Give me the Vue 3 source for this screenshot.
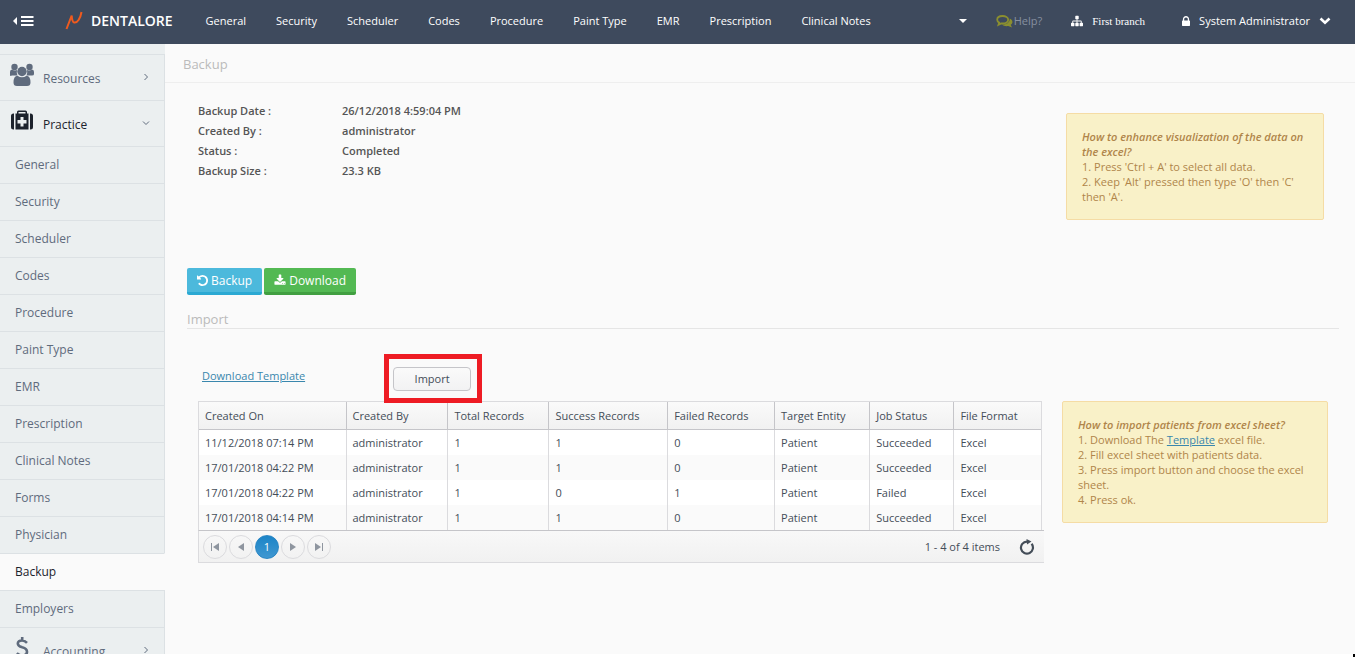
<template>
  <div class="app">
    <header class="topbar">
      <button class="menu-toggle" type="button" aria-label="Toggle menu">
        <svg width="21" height="12" viewBox="0 0 21 12">
          <path d="M4 2v8L0 6z" fill="#fff" />
          <path d="M8 2h12.500M8 6h12.500M8 10h12.500" stroke="#fff" stroke-width="2" />
        </svg>
      </button>
      <a class="brand" href="#">
        <svg width="18" height="19" viewBox="0 0 18 19">
          <path d="M1.500 18L6.700 4.500C6.900 7.500 7 10.800 9.200 11.500C12.500 12.300 15.500 7 16.500 1" fill="none" stroke="#f05a1e" stroke-width="2" stroke-linejoin="bevel" />
        </svg>
        <span>DENTALORE</span>
      </a>
      <nav class="topnav">
        <a v-for="item in topMenu" :key="item" href="#">{{ item }}</a>
      </nav>
      <button class="caret" type="button" aria-label="More">
        <svg width="8" height="4" viewBox="0 0 8 4"><path d="M0 0h8L4 4z" fill="#fff" /></svg>
      </button>
      <a class="help" href="#">
        <svg width="17" height="14" viewBox="0 0 17 14">
          <path d="M6.500 2C3.500 2 1.200 3.400 1.200 5.700c0 1.300.8 2.300 2 2.900L2.500 10.800l2.800-1.400c4 .5 6.900-1.100 6.900-3.700C12.200 3.400 9.500 2 6.500 2z" fill="none" stroke="#8b8f2f" stroke-width="1.800" />
          <path d="M13.700 4.500c3.600 1.700 3.300 4.900 1 6.300l1.300 2.700-3.700-1.500c-2.700.4-4.800-.1-6.200-1.400 4.400 0 8-2 7.600-6.100z" fill="#8b8f2f" />
        </svg>
        <span>Help?</span>
      </a>
      <a class="branch" href="#">
        <svg width="12" height="12" viewBox="0 0 1792 1792">
          <path fill="#fff" d="M1792 1248v320q0 40-28 68t-68 28h-320q-40 0-68-28t-28-68v-320q0-40 28-68t68-28h96v-192h-512v192h96q40 0 68 28t28 68v320q0 40-28 68t-68 28h-320q-40 0-68-28t-28-68v-320q0-40 28-68t68-28h96v-192h-512v192h96q40 0 68 28t28 68v320q0 40-28 68t-68 28h-320q-40 0-68-28t-28-68v-320q0-40 28-68t68-28h96v-192q0-52 38-90t90-38h512v-192h-96q-40 0-68-28t-28-68v-320q0-40 28-68t68-28h320q40 0 68 28t28 68v320q0 40-28 68t-68 28h-96v192h512q52 0 90 38t38 90v192h96q40 0 68 28t28 68z" />
        </svg>
        <span>First branch</span>
      </a>
      <a class="user" href="#">
        <svg width="8" height="10" viewBox="320 128 1152 1408">
          <path fill="#fff" d="M640 768h512v-192q0-106-75-181t-181-75-181 75-75 181v192zm832 96v576q0 40-28 68t-68 28h-960q-40 0-68-28t-28-68v-576q0-40 28-68t68-28h32v-192q0-184 132-316t316-132 316 132 132 316v192h32q40 0 68 28t28 68z" />
        </svg>
        <span>System Administrator</span>
        <svg width="12" height="8" viewBox="0 0 12 8">
          <path d="M1.500 1.500L6 5.700l4.500-4.200" fill="none" stroke="#fff" stroke-width="2.600" />
        </svg>
      </a>
    </header>

    <div class="body">
      <aside class="sidebar">
        <a class="group" href="#">
          <svg width="24" height="24" viewBox="0 0 24 24" fill="#5f6b7d">
            <circle cx="4.500" cy="4" r="3.200" />
            <circle cx="19.500" cy="4" r="3.200" />
            <path d="M0 12V9q0-2.500 2-2.500 2.500 1.500 5 .5-.7 3 .5 5.500H2Q0 13.500 0 12z" />
            <path d="M24 12V9q0-2.500-2-2.500-2.500 1.500-5 .5.7 3-.5 5.500H22q2 0 2-1.500z" />
            <circle cx="12" cy="8.500" r="4.700" />
            <path d="M3.500 19.500q0-6.500 4-6.800 4.500 3 9 0 4 .3 4 6.800 0 3.500-3.500 3.500H7q-3.500 0-3.500-3.500z" />
          </svg>
          <span>Resources</span>
          <svg class="arrow" width="8" height="8" viewBox="0 0 8 8"><path d="M2.500 1L5.500 4l-3 3" /></svg>
        </a>
        <a class="group open" href="#">
          <svg width="24" height="24" viewBox="0 0 24 24" fill="#1c222c">
            <path d="M4 4.500v16H3.500Q1 20.500 1 18V7q0-2.500 2.500-2.500zM20 4.500v16h.5Q23 20.500 23 18V7q0-2.500-2.500-2.500z" />
            <path fill-rule="evenodd" d="M5.500 4.500H7V3q0-1.500 1.500-1.500h7Q17 1.500 17 3v1.500h1.500v16h-13zM8.500 3v1.500h7V3zM10.500 8v3h-3v3.500h3v3h3v-3h3V11h-3V8z" />
          </svg>
          <span>Practice</span>
          <svg class="arrow" width="8" height="6" viewBox="0 0 8 6"><path d="M1 1.500l3 3 3-3" /></svg>
        </a>
        <a v-for="item in sideMenu" :key="item" class="sub" :class="{ active: item === current }" href="#">{{ item }}</a>
        <a class="group" href="#">
          <svg width="24" height="24" viewBox="0 0 24 24">
            <path d="M17 6.800Q14.800 4.500 12 4.500 7.800 4.500 7.800 7.500q0 2.500 4.400 3.800 4.800 1.300 4.800 4.500 0 3.700-4.800 3.700-3.200 0-5.400-2.300M12.200 1v3.500M12.200 19.500V23" fill="none" stroke="#5f6b7d" stroke-width="2.600" />
          </svg>
          <span>Accounting</span>
          <svg class="arrow" width="8" height="8" viewBox="0 0 8 8"><path d="M2.500 1L5.500 4l-3 3" /></svg>
        </a>
      </aside>

      <main class="content">
        <h1 class="page-title">Backup</h1>

        <section class="summary">
          <dl class="details">
            <template v-for="row in details" :key="row.label">
              <dt>{{ row.label }} :</dt>
              <dd>{{ row.value }}</dd>
            </template>
          </dl>
          <div class="note note-excel">
            <strong>How to enhance visualization of the data on the excel?</strong>
            <p>1. Press 'Ctrl + A' to select all data.</p>
            <p>2. Keep 'Alt' pressed then type 'O' then 'C' then 'A'.</p>
          </div>
        </section>

        <div class="actions">
          <button class="btn btn-info" type="button">
            <svg width="11" height="13" viewBox="0 0 1536 1792">
              <path fill="#fff" d="M1536 896q0 156-61 298t-164 245-245 164-298 61q-172 0-327-72.500t-264-204.500q-7-10-6.500-22.500t8.500-20.500l137-138q10-9 25-9 16 2 23 12 73 95 179 147t225 52q104 0 198.500-40.500t163.500-109.500 109.500-163.500 40.500-198.500-40.500-198.500-109.500-163.500-163.500-109.500-198.500-40.500q-98 0-188 35.500t-160 101.500l137 138q31 30 14 69-17 40-59 40h-448q-26 0-45-19t-19-45v-448q0-42 40-59 39-17 69 14l130 129q107-101 244.500-156.500t284.500-55.500q156 0 298 61t245 164 164 245 61 298z" />
            </svg>
            Backup
          </button>
          <button class="btn btn-success" type="button">
            <svg width="12" height="13" viewBox="0 0 1792 1792">
              <path fill="#fff" d="M1344 1344q0-26-19-45t-45-19-45 19-19 45 19 45 45 19 45-19 19-45zm256 0q0-26-19-45t-45-19-45 19-19 45 19 45 45 19 45-19 19-45zm128-224v320q0 40-28 68t-68 28h-1472q-40 0-68-28t-28-68v-320q0-40 28-68t68-28h465l135 136q58 56 136 56t136-56l136-136h464q40 0 68 28t28 68zm-325-569q17 41-14 70l-448 448q-18 19-45 19t-45-19l-448-448q-31-29-14-70 17-39 59-39h256v-448q0-26 19-45t45-19h256q26 0 45 19t19 45v448h256q42 0 59 39z" />
            </svg>
            Download
          </button>
        </div>

        <h2 class="section-title">Import</h2>

        <section class="import">
          <div class="import-main">
            <div class="import-tools">
              <a class="template-link" href="#">Download Template</a>
              <div class="highlight">
                <button class="btn-import" type="button">Import</button>
              </div>
            </div>

            <table class="grid">
              <thead>
                <tr>
                  <th v-for="col in columns" :key="col.key" :style="{ width: col.width }">{{ col.title }}</th>
                </tr>
              </thead>
              <tbody>
                <tr v-for="(job, i) in jobs" :key="i">
                  <td v-for="col in columns" :key="col.key">{{ job[col.key] }}</td>
                </tr>
              </tbody>
            </table>
            <div class="pager">
              <button type="button" aria-label="First page">
                <svg width="10" height="8" viewBox="0 0 10 8"><path d="M1 0h1v8H1zM3 4l6-4v8z" /></svg>
              </button>
              <button type="button" aria-label="Previous page">
                <svg width="10" height="8" viewBox="0 0 10 8"><path d="M2 4l6-4v8z" /></svg>
              </button>
              <button class="selected" type="button">1</button>
              <button type="button" aria-label="Next page">
                <svg width="10" height="8" viewBox="0 0 10 8"><path d="M8 4L2 0v8z" /></svg>
              </button>
              <button type="button" aria-label="Last page">
                <svg width="10" height="8" viewBox="0 0 10 8"><path d="M8 0h1v8H8zM7 4L1 0v8z" /></svg>
              </button>
              <span class="pager-info">1 - 4 of 4 items</span>
              <a class="refresh" href="#" aria-label="Refresh">
                <svg width="16" height="16" viewBox="0 0 16 16">
                  <path d="M12.600 4.800A6 6 0 1 1 8 2.600" fill="none" stroke="#444d58" stroke-width="2.200" />
                  <path d="M7.500 0l5 2.400-4.500 3.200z" fill="#444d58" />
                </svg>
              </a>
            </div>
          </div>

          <div class="note note-import">
            <strong>How to import patients from excel sheet?</strong>
            <p>1. Download The <a href="#">Template</a> excel file.</p>
            <p>2. Fill excel sheet with patients data.</p>
            <p>3. Press import button and choose the excel sheet.</p>
            <p>4. Press ok.</p>
          </div>
        </section>
      </main>
    </div>
    <span class="corner"></span>
  </div>
</template>

<script setup>
import { ref } from "vue";

const topMenu = ["General", "Security", "Scheduler", "Codes", "Procedure", "Paint Type", "EMR", "Prescription", "Clinical Notes"];

const sideMenu = [...topMenu, "Forms", "Physician", "Backup", "Employers"];
const current = ref("Backup");

const details = [
  { label: "Backup Date", value: "26/12/2018 4:59:04 PM" },
  { label: "Created By", value: "administrator" },
  { label: "Status", value: "Completed" },
  { label: "Backup Size", value: "23.3 KB" },
];

const columns = [
  { key: "createdOn", title: "Created On", width: "17.4%" },
  { key: "createdBy", title: "Created By", width: "12.1%" },
  { key: "total", title: "Total Records", width: "12%" },
  { key: "success", title: "Success Records", width: "14.1%" },
  { key: "failed", title: "Failed Records", width: "12.7%" },
  { key: "entity", title: "Target Entity", width: "11.3%" },
  { key: "status", title: "Job Status", width: "10%" },
  { key: "format", title: "File Format", width: "10.4%" },
];

const job = (createdOn, success, failed, status) => ({
  createdOn,
  createdBy: "administrator",
  total: 1,
  success,
  failed,
  entity: "Patient",
  status,
  format: "Excel",
});

const jobs = ref([
  job("11/12/2018 07:14 PM", 1, 0, "Succeeded"),
  job("17/01/2018 04:22 PM", 1, 0, "Succeeded"),
  job("17/01/2018 04:22 PM", 0, 1, "Failed"),
  job("17/01/2018 04:14 PM", 1, 0, "Succeeded"),
]);
</script>

<style>
body {
  margin: 0;
  background: #fff;
}
</style>

<style scoped>
.app {
  display: flex;
  flex-direction: column;
  height: calc(100vh - 3px);
  background: #fafafa;
  color: #444d58;
  font-family: "Open Sans", "Noto Sans", sans-serif;
  font-size: 11px;
}

.app *,
.app {
  box-sizing: border-box;
}

a {
  color: inherit;
  text-decoration: none;
}

button {
  padding: 0;
  border: none;
  background: none;
  font-family: inherit;
  cursor: pointer;
}

svg {
  display: block;
  flex: none;
}

/* top bar */
.topbar {
  display: flex;
  align-items: center;
  flex: none;
  height: 44px;
  padding: 0 24px 3px 13px;
  background: #3e4a5d;
  color: #fff;
  white-space: nowrap;
}

.brand {
  display: flex;
  align-items: center;
  gap: 8px;
  margin-left: 31px;
  font-size: 14px;
  font-weight: 600;
}

.topnav {
  display: flex;
  gap: 30px;
  margin-left: 33px;
}

.caret {
  margin-left: auto;
}

.help,
.branch,
.user {
  display: flex;
  align-items: center;
}

.help {
  gap: 1px;
  margin-left: 29px;
  color: #8690a0;
}

.branch {
  gap: 9px;
  margin-left: 29px;
  font-family: "Liberation Serif", serif;
  font-size: 11px;
}

.user {
  gap: 9px;
  margin-left: 37px;
}

/* side menu */
.body {
  display: flex;
  flex: 1;
  min-height: 0;
}

.sidebar {
  flex: none;
  width: 165px;
  padding-top: 10px;
  overflow: hidden;
  background: #ebeff0;
  color: #5f6b7d;
  font-size: 12px;
}

.sidebar a {
  display: flex;
  align-items: center;
  border-top: 1px solid #dce1e4;
  border-right: 1px solid #dce1e4;
}

.group {
  gap: 9px;
  height: 46px;
  padding: 0 14px 5px 10px;
}

.group span {
  padding-top: 6px;
}

.group.open {
  color: #1c222c;
}

.arrow {
  margin-top: 3px;
  margin-left: auto;
  fill: none;
  stroke: #5f6b7d;
}

.sub {
  height: 37px;
  padding-bottom: 1px;
  padding-left: 15px;
}

.sidebar .active {
  background: #fafafa;
  border-right-color: #fafafa;
  color: #1c222c;
}

/* content */
.content {
  flex: 1;
  min-width: 0;
}

.page-title,
.section-title {
  margin: 0;
  padding-top: 2px;
  color: #bbb;
  font-size: 13px;
  font-weight: normal;
}

.page-title {
  padding-left: 18px;
  border-bottom: 1px solid #eee;
  line-height: 36px;
}

.section-title {
  margin: 14px 16px 0 22px;
  border-bottom: 1px solid #e5e5e5;
  line-height: 17px;
}

.summary {
  display: flex;
  justify-content: space-between;
  align-items: flex-start;
  min-height: 185px;
  padding: 18px 31px 0 33px;
}

.details {
  display: grid;
  grid-template-columns: 144px auto;
  margin: 0;
  color: #555;
  line-height: 20px;
  font-weight: 600;
}

.details dd {
  margin: 0;
}

.note {
  flex: none;
  padding: 15px;
  border: 1px solid #f5dca5;
  border-radius: 2px;
  background: #f9f1c8;
  color: #b0854a;
  line-height: 15px;
}

.note strong {
  font-style: italic;
  font-weight: 600;
}

.note p {
  margin: 0;
}

.note a,
.template-link {
  color: #3a87ad;
  text-decoration: underline;
}

.note-excel {
  width: 258px;
  margin-top: 12px;
}

.note-import {
  width: 266px;
  margin-top: 47px;
}

.actions {
  display: flex;
  gap: 2px;
  padding-left: 22px;
}

.btn {
  display: flex;
  align-items: center;
  gap: 3px;
  height: 27px;
  padding: 0 10px;
  border-radius: 2px;
  color: #fff;
  font-size: 12px;
}

.btn-info {
  background: #4cb9dc;
  border-bottom: 3px solid #2ba9d3;
}

.btn-success {
  background: #53b953;
  border-bottom: 3px solid #419f41;
}

/* import jobs */
.import {
  display: flex;
  align-items: flex-start;
  gap: 18px;
  padding: 25px 27px 0 33px;
}

.import-main {
  flex: 1;
  min-width: 0;
}

.import-tools {
  display: flex;
  align-items: center;
  gap: 79px;
  height: 47px;
  padding: 0 4px 5px;
}

.highlight {
  position: relative;
  z-index: 1;
  margin-bottom: -6px;
  padding: 8px 6px 7px 4px;
  border: 5px solid #ee1c24;
}

.btn-import {
  display: block;
  width: 78px;
  height: 24px;
  border: 1px solid #c5c5c9;
  border-radius: 4px;
  background: linear-gradient(#fafafa, #f2f2f3);
  color: #444d58;
  font-size: 11px;
}

.grid {
  width: calc(100% - 2px);
  table-layout: fixed;
  border: 1px solid #dbdbde;
  border-bottom: none;
  border-spacing: 0;
  background: #fff;
}

.grid th,
.grid td {
  height: 25px;
  padding: 0 6px;
  border-left: 1px solid #dbdbde;
  text-align: left;
  font-weight: normal;
  white-space: nowrap;
}

.grid th {
  height: 28px;
  border-color: #c5c5c9;
  border-bottom: 1px solid #c5c5c9;
  background: linear-gradient(#fafafa, #f1f1f1);
}

.grid th:first-child,
.grid td:first-child {
  border-left: none;
}

.grid tbody tr:nth-child(even) {
  background: #fafafa;
}

.pager {
  display: flex;
  align-items: center;
  gap: 2px;
  height: 33px;
  padding: 0 9px 0 4px;
  border: 1px solid #dbdbde;
  border-top-color: #c5c5c9;
  border-right: none;
  background: linear-gradient(#f8f8f8, #f1f1f1);
}

.pager button {
  display: flex;
  align-items: center;
  justify-content: center;
  width: 24px;
  height: 24px;
  border: 1px solid #dbdbde;
  border-radius: 50%;
  fill: #8e959f;
}

.pager .selected {
  border-color: #2a86c4;
  background: linear-gradient(#1b84c7, #3f97d1);
  color: #fff;
  font-size: 11px;
}

.pager-info {
  margin-left: auto;
}

.refresh {
  margin-left: 17px;
}

.corner {
  position: absolute;
  right: 0;
  bottom: 0;
  width: 2px;
  height: 3px;
  background: #000;
}
</style>
